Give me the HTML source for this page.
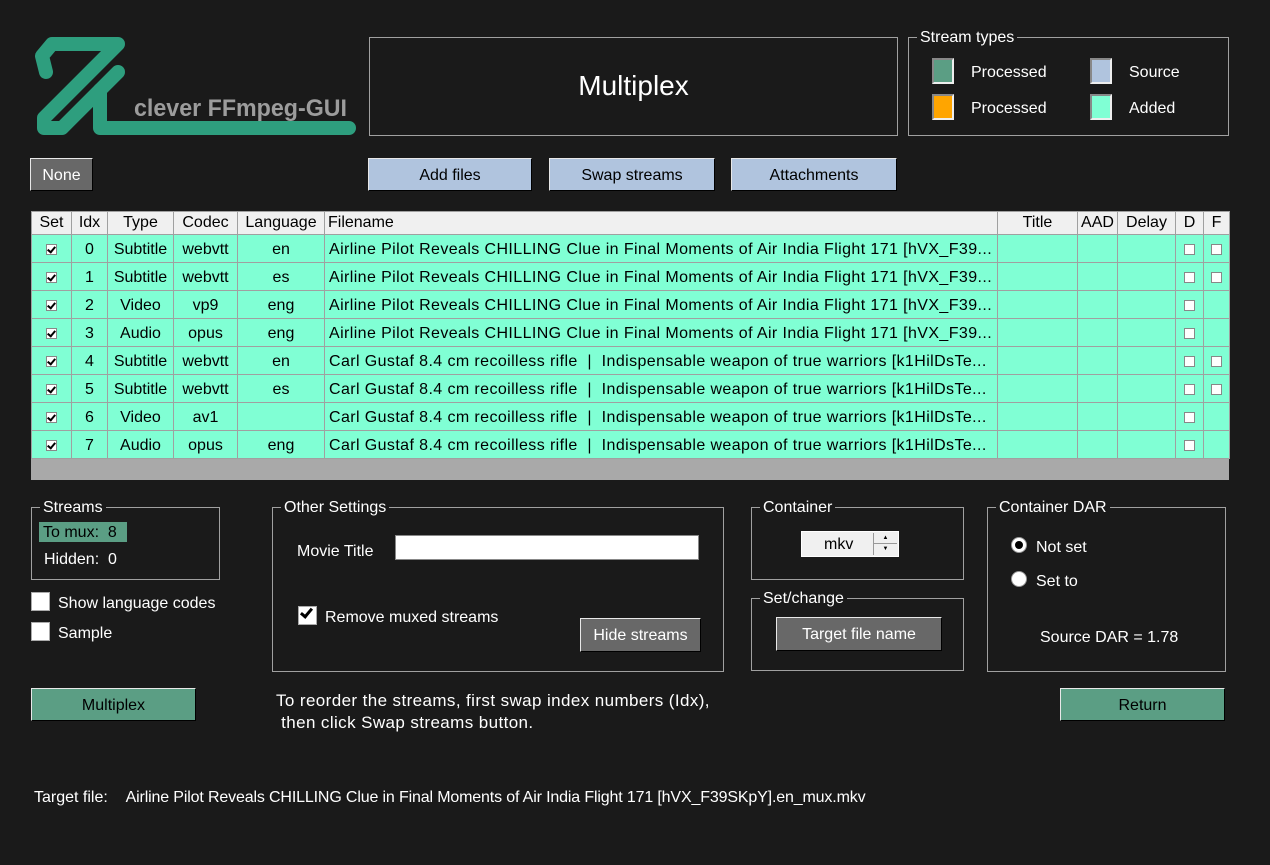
<!DOCTYPE html>
<html><head><meta charset="utf-8"><style>
*{box-sizing:border-box;margin:0;padding:0}
body{width:1270px;height:865px;background:#1a1a1a;font-family:"Liberation Sans",Arial,sans-serif;font-size:16px;color:#fff;position:relative;overflow:hidden}
.a{position:absolute}
.gb{position:absolute;border:1px solid #a0a0a0}
.gb>.lg{position:absolute;top:-10px;left:8px;background:#1a1a1a;padding:0 3px;font-size:16px;line-height:20px}
.btn{position:absolute;display:flex;align-items:center;justify-content:center;font-size:16px;border:1px solid;border-color:#e8e8e8 #000 #000 #e8e8e8;padding-top:2px}
.blue{background:#b0c4de;color:#000}
.gray{background:#686868;color:#fff}
.green{background:#5b9e84;color:#000}
table{border-collapse:collapse;table-layout:fixed;position:absolute;left:31px;top:211px;width:1198px}
td,th{border:1px solid #a0a0a0;font-weight:normal;color:#000;font-size:16px;white-space:nowrap;overflow:hidden;text-align:center;padding:0 3px}
th{background:#f0f0f0;height:23px}
td{background:#80ffd4;height:28px;padding-top:2px}
td.f{text-align:left;padding-left:4px;letter-spacing:0.4px}
.cb{display:inline-block;width:11px;height:11px;border:1px solid #888;background:#fff;vertical-align:middle;position:relative}
.cb.c::after{content:"";position:absolute;left:2px;top:0px;width:3px;height:6px;border:solid #000;border-width:0 2px 2px 0;transform:rotate(40deg)}
.bigcb{position:absolute;width:19px;height:19px;background:#fff;border:1px solid #aaa}
.sw{position:absolute;width:22px;height:26px;border:2px solid;border-color:#888 #eee #eee #888}
.t{top:2px}
</style></head><body>
<svg class="a" style="left:0;top:0" width="370" height="145">
<g fill="none" stroke="#2e9e7e" stroke-width="14" stroke-linejoin="round" stroke-linecap="round">
<path d="M46,72 L42,56 L52,44 L118,44 L44,118 L44,128 L60,128"/>
<path d="M118,72 L62,128"/>
<path d="M100,90 L100,128 L349,128"/>
</g>
<text x="134" y="116" font-family="Liberation Sans" font-weight="bold" font-size="24" fill="#9c9c9c" textLength="213" lengthAdjust="spacingAndGlyphs">clever FFmpeg-GUI</text>
</svg>
<div class="gb" style="left:369px;top:37px;width:529px;height:99px"></div>
<div class="a" style="left:369px;top:70px;width:529px;text-align:center;font-size:28px">Multiplex</div>
<div class="gb" style="left:908px;top:37px;width:321px;height:99px"><span class="lg">Stream types</span></div>
<div class="sw" style="left:932px;top:58px;background:#5b9e84"></div>
<div class="a" style="left:971px;top:64px">Processed</div>
<div class="sw" style="left:1090px;top:58px;background:#b0c4de"></div>
<div class="a" style="left:1129px;top:64px">Source</div>
<div class="sw" style="left:932px;top:94px;background:#ffa500"></div>
<div class="a" style="left:971px;top:100px">Processed</div>
<div class="sw" style="left:1090px;top:94px;background:#80ffd4"></div>
<div class="a" style="left:1129px;top:100px">Added</div>

<div class="btn gray" style="left:30px;top:158px;width:63px;height:33px">None</div>
<div class="btn blue" style="left:368px;top:158px;width:164px;height:33px">Add files</div>
<div class="btn blue" style="left:549px;top:158px;width:166px;height:33px">Swap streams</div>
<div class="btn blue" style="left:731px;top:158px;width:166px;height:33px">Attachments</div>

<div class="a" style="left:31px;top:458px;width:1198px;height:22px;background:#a9a9a9"></div>
<table>
<colgroup><col style="width:40px"><col style="width:36px"><col style="width:66px"><col style="width:64px"><col style="width:87px"><col style="width:673px"><col style="width:80px"><col style="width:40px"><col style="width:58px"><col style="width:28px"><col style="width:26px"></colgroup>
<tr><th>Set</th><th>Idx</th><th>Type</th><th>Codec</th><th>Language</th><th style="text-align:left">Filename</th><th>Title</th><th>AAD</th><th>Delay</th><th>D</th><th>F</th></tr>
<tr><td><span class="cb c"></span></td><td>0</td><td>Subtitle</td><td>webvtt</td><td>en</td><td class="f">Airline Pilot Reveals CHILLING Clue in Final Moments of Air India Flight 171 [hVX_F39...</td><td></td><td></td><td></td><td><span class="cb"></span></td><td><span class="cb"></span></td></tr>
<tr><td><span class="cb c"></span></td><td>1</td><td>Subtitle</td><td>webvtt</td><td>es</td><td class="f">Airline Pilot Reveals CHILLING Clue in Final Moments of Air India Flight 171 [hVX_F39...</td><td></td><td></td><td></td><td><span class="cb"></span></td><td><span class="cb"></span></td></tr>
<tr><td><span class="cb c"></span></td><td>2</td><td>Video</td><td>vp9</td><td>eng</td><td class="f">Airline Pilot Reveals CHILLING Clue in Final Moments of Air India Flight 171 [hVX_F39...</td><td></td><td></td><td></td><td><span class="cb"></span></td><td></td></tr>
<tr><td><span class="cb c"></span></td><td>3</td><td>Audio</td><td>opus</td><td>eng</td><td class="f">Airline Pilot Reveals CHILLING Clue in Final Moments of Air India Flight 171 [hVX_F39...</td><td></td><td></td><td></td><td><span class="cb"></span></td><td></td></tr>
<tr><td><span class="cb c"></span></td><td>4</td><td>Subtitle</td><td>webvtt</td><td>en</td><td class="f">Carl Gustaf 8.4 cm recoilless rifle &nbsp;|&nbsp; Indispensable weapon of true warriors [k1HilDsTe...</td><td></td><td></td><td></td><td><span class="cb"></span></td><td><span class="cb"></span></td></tr>
<tr><td><span class="cb c"></span></td><td>5</td><td>Subtitle</td><td>webvtt</td><td>es</td><td class="f">Carl Gustaf 8.4 cm recoilless rifle &nbsp;|&nbsp; Indispensable weapon of true warriors [k1HilDsTe...</td><td></td><td></td><td></td><td><span class="cb"></span></td><td><span class="cb"></span></td></tr>
<tr><td><span class="cb c"></span></td><td>6</td><td>Video</td><td>av1</td><td></td><td class="f">Carl Gustaf 8.4 cm recoilless rifle &nbsp;|&nbsp; Indispensable weapon of true warriors [k1HilDsTe...</td><td></td><td></td><td></td><td><span class="cb"></span></td><td></td></tr>
<tr><td><span class="cb c"></span></td><td>7</td><td>Audio</td><td>opus</td><td>eng</td><td class="f">Carl Gustaf 8.4 cm recoilless rifle &nbsp;|&nbsp; Indispensable weapon of true warriors [k1HilDsTe...</td><td></td><td></td><td></td><td><span class="cb"></span></td><td></td></tr>
</table>

<div class="gb" style="left:31px;top:507px;width:189px;height:73px"><span class="lg">Streams</span></div>
<div class="a" style="left:39px;top:522px;width:88px;height:20px;background:#5b9e84;color:#000;padding-left:4px;line-height:22px">To mux:&nbsp; 8</div>
<div class="a" style="left:44px;top:551px">Hidden:&nbsp; 0</div>
<div class="bigcb" style="left:31px;top:592px"></div>
<div class="a" style="left:58px;top:595px">Show language codes</div>
<div class="bigcb" style="left:31px;top:622px"></div>
<div class="a" style="left:58px;top:625px">Sample</div>

<div class="gb" style="left:272px;top:507px;width:452px;height:165px"><span class="lg">Other Settings</span></div>
<div class="a" style="left:297px;top:543px">Movie Title</div>
<div class="a" style="left:395px;top:535px;width:304px;height:25px;background:#fff;border:1px solid #888"></div>
<div class="bigcb" style="left:298px;top:606px"><span style="position:absolute;left:4px;top:-1px;width:7px;height:12px;border:solid #000;border-width:0 3px 3px 0;transform:rotate(40deg)"></span></div>
<div class="a" style="left:325px;top:609px">Remove muxed streams</div>
<div class="btn gray" style="left:580px;top:618px;width:121px;height:34px">Hide streams</div>

<div class="gb" style="left:751px;top:507px;width:213px;height:73px"><span class="lg">Container</span></div>
<div class="a" style="left:801px;top:531px;width:98px;height:26px;background:#f0f0f0;border:1px solid #fff;color:#000;line-height:26px;padding-left:22px">mkv</div>
<div class="a" style="left:873px;top:533px;width:24px;height:22px;border-left:1px solid #999"><div style="height:11px;border-bottom:1px solid #999;font-size:6px;text-align:center;color:#000;line-height:10px">▲</div><div style="font-size:6px;text-align:center;color:#000;line-height:10px">▼</div></div>
<div class="gb" style="left:751px;top:598px;width:213px;height:73px"><span class="lg">Set/change</span></div>
<div class="btn gray" style="left:776px;top:617px;width:166px;height:34px">Target file name</div>

<div class="gb" style="left:987px;top:507px;width:239px;height:165px"><span class="lg">Container DAR</span></div>
<div class="a" style="left:1011px;top:537px;width:16px;height:16px;border-radius:50%;background:#fff;border:1px solid #999"><div style="margin:3px;width:8px;height:8px;border-radius:50%;background:#000"></div></div>
<div class="a" style="left:1036px;top:539px">Not set</div>
<div class="a" style="left:1011px;top:571px;width:16px;height:16px;border-radius:50%;background:#fff;border:1px solid #999"></div>
<div class="a" style="left:1036px;top:573px">Set to</div>
<div class="a" style="left:1040px;top:629px">Source DAR = 1.78</div>

<div class="btn green" style="left:31px;top:688px;width:165px;height:33px">Multiplex</div>
<div class="btn green" style="left:1060px;top:688px;width:165px;height:33px">Return</div>
<div class="a" style="left:276px;top:690px;font-size:17px;line-height:22px;letter-spacing:0.4px">To reorder the streams, first swap index numbers (Idx),<br>&nbsp;then click Swap streams button.</div>
<div class="a" style="left:34px;top:789px">Target file:&nbsp;&nbsp;&nbsp; <span style="letter-spacing:-0.15px">Airline Pilot Reveals CHILLING Clue in Final Moments of Air India Flight 171 [hVX_F39SKpY].en_mux.mkv</span></div>
</body></html>
